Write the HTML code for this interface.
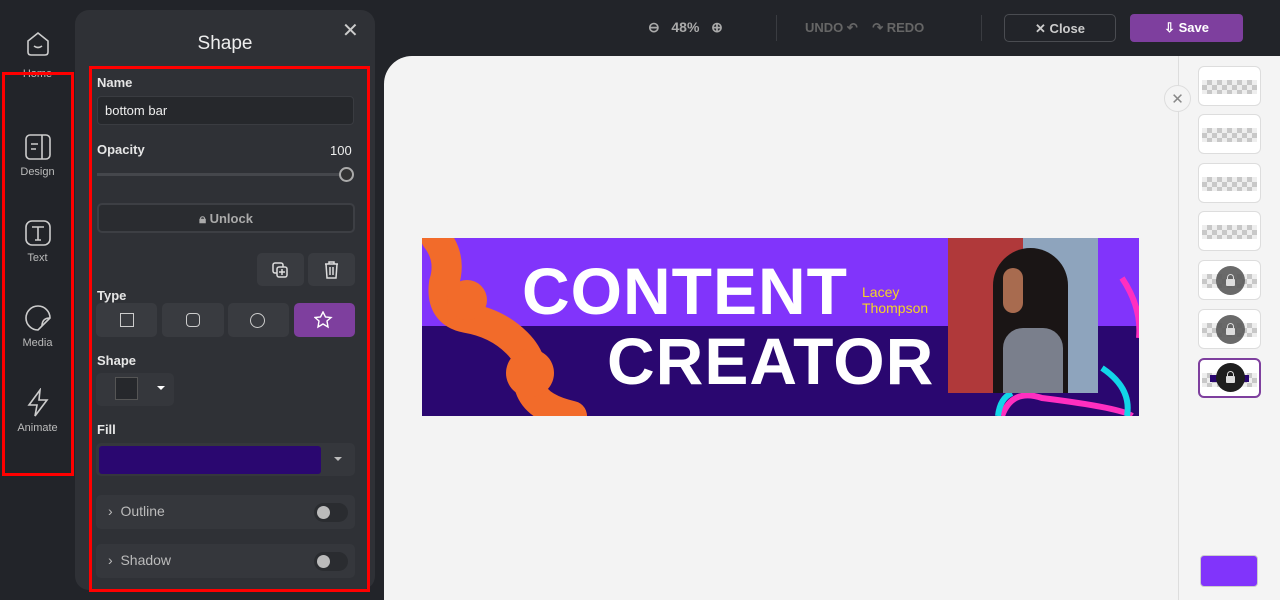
<!DOCTYPE html>
<html><head><style>
*{box-sizing:border-box;margin:0;padding:0}
body{width:1280px;height:600px;background:#222429;font-family:"Liberation Sans",sans-serif;position:relative;overflow:hidden;color:#ddd}
.abs{position:absolute}
.nav{left:0;width:75px;text-align:center;color:#bbb;font-size:11px}
.nav svg{display:block;margin:0 auto 4px}
.panel{left:75px;top:10px;width:300px;height:580px;background:#2f3136;border-radius:14px}
.lbl{font-size:13px;font-weight:bold;color:#e6e6e6}
.btn{background:#393b40;border-radius:5px}
.canvas{left:384px;top:56px;width:896px;height:544px;background:#f3f3f3;border-top-left-radius:28px}
.thumb{left:1198px;width:63px;height:40px;background:#fff;border:1px solid #ddd;border-radius:6px;overflow:hidden}
.chk{position:absolute;left:3px;right:3px;top:13px;height:14px;background:repeating-conic-gradient(#c8c8c8 0 25%,#eee 0 50%) 0 0/10px 10px}
.lock{position:absolute;left:17px;top:5px;width:29px;height:29px;border-radius:50%;background:rgba(90,90,90,.9)}
.lock:after{content:"";position:absolute;left:10px;top:13px;width:9px;height:7px;background:#ddd;border-radius:1px}
.lock:before{content:"";position:absolute;left:11px;top:8px;width:5px;height:6px;border:1.5px solid #ddd;border-bottom:none;border-radius:4px 4px 0 0}
</style></head><body>
<!-- left nav -->
<div class="abs nav" style="top:28px"><svg width="30" height="30" viewBox="0 0 30 30" fill="none" stroke="#ccc" stroke-width="1.6"><path d="M5 13 L15 5 L25 13 V24 Q25 27 22 27 H8 Q5 27 5 24Z"/><path d="M11 18 Q15 21 19 18"/></svg><span style="position:relative;top:6px">Home</span></div>
<div class="abs" style="left:2px;top:72px;width:72px;height:404px;border:3px solid #f00"></div>
<div class="abs nav" style="top:132px"><svg width="30" height="30" viewBox="0 0 30 30" fill="none" stroke="#ccc" stroke-width="1.6"><rect x="3" y="3" width="24" height="24" rx="4"/><path d="M19 3V27M8 12H15M8 17H13"/></svg>Design</div>
<div class="abs nav" style="top:218px"><svg width="30" height="30" viewBox="0 0 30 30" fill="none" stroke="#ccc" stroke-width="1.6"><rect x="3" y="3" width="24" height="24" rx="6"/><path d="M9 9H21M15 9V22M12 22H18"/></svg>Text</div>
<div class="abs nav" style="top:303px"><svg width="30" height="30" viewBox="0 0 30 30" fill="none" stroke="#ccc" stroke-width="1.6"><path d="M27 15A12 12 0 1 0 15 27L27 15Z"/><path d="M27 15Q19 15 19 23"/></svg>Media</div>
<div class="abs nav" style="top:388px"><svg width="30" height="30" viewBox="0 0 30 30" fill="none" stroke="#ccc" stroke-width="1.6"><path d="M17 2L6 17H14L12 28L24 12H16Z"/></svg>Animate</div>

<!-- panel -->
<div class="abs panel"></div>
<div class="abs" style="left:75px;width:300px;top:33px;text-align:center;font-size:19px;color:#eee">Shape</div>
<div class="abs" style="left:342px;top:18px;font-size:20px;color:#ccc">✕</div>
<div class="abs" style="left:89px;top:66px;width:281px;height:526px;border:3px solid #f00"></div>
<div class="abs lbl" style="left:97px;top:75px">Name</div>
<div class="abs" style="left:97px;top:96px;width:257px;height:29px;background:#26282c;border:1px solid #3a3c41;border-radius:4px;font-size:13px;color:#eee;padding:6px 7px">bottom bar</div>
<div class="abs lbl" style="left:97px;top:142px">Opacity</div>
<div class="abs" style="left:330px;top:143px;font-size:13px;color:#eee">100</div>
<div class="abs" style="left:97px;top:173px;width:245px;height:3px;background:#45474c"></div>
<div class="abs" style="left:339px;top:167px;width:15px;height:15px;border-radius:50%;border:2px solid #aaa;background:#333"></div>
<div class="abs" style="left:97px;top:203px;width:258px;height:30px;border:2px solid #3d3f44;background:#2a2c30;border-radius:5px;text-align:center;font-size:13px;font-weight:bold;color:#aaa;padding-top:6px">🔒︎ Unlock</div>
<div class="abs btn" style="left:257px;top:253px;width:47px;height:33px"><svg class="abs" style="left:14px;top:8px" width="18" height="18" viewBox="0 0 18 18" fill="none" stroke="#ddd" stroke-width="1.5"><rect x="2" y="2" width="10" height="10" rx="2"/><rect x="6" y="6" width="10" height="10" rx="2" fill="#393b40"/><path d="M11 8V14M8 11H14"/></svg></div>
<div class="abs btn" style="left:308px;top:253px;width:47px;height:33px"><svg class="abs" style="left:15px;top:8px" width="17" height="18" viewBox="0 0 17 18" fill="none" stroke="#ddd" stroke-width="1.5"><path d="M2 3H15M6 3V1H11V3M3 3L4 17H13L14 3M7 6V14M10 6V14"/></svg></div>
<div class="abs lbl" style="left:97px;top:288px">Type</div>
<div class="abs btn" style="left:96px;top:303px;width:61px;height:34px"><div class="abs" style="left:24px;top:10px;width:14px;height:14px;border:1.5px solid #ccc"></div></div>
<div class="abs btn" style="left:162px;top:303px;width:62px;height:34px"><div class="abs" style="left:24px;top:10px;width:14px;height:14px;border:1.5px solid #ccc;border-radius:4px"></div></div>
<div class="abs btn" style="left:228px;top:303px;width:61px;height:34px"><div class="abs" style="left:22px;top:10px;width:15px;height:15px;border:1.5px solid #ccc;border-radius:50%"></div></div>
<div class="abs" style="left:294px;top:303px;width:61px;height:34px;background:#7e3f9e;border-radius:5px"><svg class="abs" style="left:20px;top:8px" width="22" height="18" viewBox="0 0 22 18" fill="none" stroke="#fff" stroke-width="1.4"><path d="M9 1L11.5 6L17 6.5L13 10L14 16L9 13L4 16L5 10L1 6.5L6.5 6Z"/></svg></div>
<div class="abs lbl" style="left:97px;top:353px">Shape</div>
<div class="abs btn" style="left:96px;top:373px;width:78px;height:33px;background:#35373c"><div class="abs" style="left:19px;top:4px;width:23px;height:23px;border:1.5px solid #555;background:#26282c"></div><div class="abs" style="left:61px;top:13px;border:4px solid transparent;border-top:4px solid #fff"></div></div>
<div class="abs lbl" style="left:97px;top:422px">Fill</div>
<div class="abs btn" style="left:96px;top:443px;width:259px;height:33px;background:#35373c"><div class="abs" style="left:3px;top:3px;width:222px;height:28px;background:#2a0770;border-radius:3px"></div><div class="abs" style="left:238px;top:14px;border:4px solid transparent;border-top:4px solid #bbb"></div></div>
<div class="abs btn" style="left:96px;top:495px;width:259px;height:34px;background:#35373c;font-size:14px;color:#bbb;padding:8px 12px">› &nbsp;Outline<div class="abs" style="left:218px;top:8px;width:34px;height:19px;border-radius:10px;background:#2a2c30"><div class="abs" style="left:3px;top:3px;width:13px;height:13px;border-radius:50%;background:#bbb"></div></div></div>
<div class="abs btn" style="left:96px;top:544px;width:259px;height:34px;background:#35373c;font-size:14px;color:#bbb;padding:8px 12px">› &nbsp;Shadow<div class="abs" style="left:218px;top:8px;width:34px;height:19px;border-radius:10px;background:#2a2c30"><div class="abs" style="left:3px;top:3px;width:13px;height:13px;border-radius:50%;background:#bbb"></div></div></div>

<!-- top bar -->
<div class="abs" style="left:648px;top:19px;font-size:14px;color:#aaa;font-weight:bold">⊖ &nbsp; 48% &nbsp; ⊕</div>
<div class="abs" style="left:776px;top:15px;width:1px;height:26px;background:#3a3c41"></div>
<div class="abs" style="left:805px;top:20px;font-size:13px;font-weight:bold;color:#666">UNDO ↶ &nbsp;&nbsp; ↷ REDO</div>
<div class="abs" style="left:981px;top:15px;width:1px;height:26px;background:#3a3c41"></div>
<div class="abs" style="left:1004px;top:14px;width:112px;height:28px;border:1.5px solid #4a4c51;border-radius:5px;text-align:center;font-size:13px;font-weight:bold;color:#ccc;padding-top:6px">✕ Close</div>
<div class="abs" style="left:1130px;top:14px;width:113px;height:28px;background:#7e3f9e;border-radius:4px;text-align:center;font-size:13px;font-weight:bold;color:#fff;padding-top:6px">⇩ Save</div>

<!-- canvas -->
<div class="abs canvas"></div>
<div class="abs" style="left:1178px;top:56px;width:102px;height:544px;background:#f4f4f4;border-left:1px solid #ddd"></div>
<div class="abs" style="left:1164px;top:85px;width:27px;height:27px;border-radius:50%;background:#f4f4f4;border:1px solid #ddd;text-align:center;color:#888;font-size:15px;padding-top:4px">✕</div>
<div class="abs thumb" style="top:66px"><div class="chk"></div></div>
<div class="abs thumb" style="top:114px"><div class="chk"></div></div>
<div class="abs thumb" style="top:163px"><div class="chk"></div></div>
<div class="abs thumb" style="top:211px"><div class="chk"></div></div>
<div class="abs thumb" style="top:260px"><div class="chk"></div><div class="lock"></div></div>
<div class="abs thumb" style="top:309px"><div class="chk"></div><div class="lock"></div></div>
<div class="abs thumb" style="top:358px;border:2px solid #7e3f9e"><div class="chk" style="left:2px;right:2px"></div><div class="chk" style="background:#2a0770;top:15px;left:10px;right:10px;height:7px"></div><div class="lock" style="background:#1e1e1e;left:16px;top:3px"></div></div>
<div class="abs" style="left:1200px;top:555px;width:58px;height:32px;background:#8134fb;border-radius:4px;border:1px solid #ccc"></div>

<!-- banner -->
<div class="abs" style="left:422px;top:238px;width:717px;height:178px;background:#2a0770;overflow:hidden">
<div class="abs" style="left:0;top:0;width:717px;height:88px;background:#8134fb"></div>
<svg class="abs" style="left:0;top:0" width="717" height="178"><path d="M14 0 Q30 20 22 45 Q18 75 45 80 Q75 85 95 105 Q115 125 108 150 Q115 170 150 178" fill="none" stroke="#f26b2a" stroke-width="30" stroke-linecap="round"/><circle cx="45" cy="62" r="20" fill="#f26b2a"/><circle cx="108" cy="135" r="24" fill="#f26b2a"/><path d="M700 40 Q720 70 717 100" fill="none" stroke="#ff2fc0" stroke-width="6"/><path d="M580 178 Q590 150 620 160 Q700 170 710 178" fill="none" stroke="#ff2fc0" stroke-width="6"/><path d="M680 130 Q710 150 705 178" fill="none" stroke="#12d6e8" stroke-width="6"/><path d="M576 178 Q578 160 590 155" fill="none" stroke="#12d6e8" stroke-width="6"/></svg>
<div class="abs" style="left:100px;top:15px;font-size:66px;font-weight:900;color:#fff;letter-spacing:1px">CONTENT</div>
<div class="abs" style="left:185px;top:85px;font-size:66px;font-weight:900;color:#fff;letter-spacing:1px">CREATOR</div>
<div class="abs" style="left:440px;top:46px;font-size:14px;color:#f5d326;line-height:16px">Lacey<br>Thompson</div>
<div class="abs" style="left:526px;top:0;width:150px;height:155px;background:linear-gradient(90deg,#b0393a 0 50%,#8ea4bd 50%);overflow:hidden"><div class="abs" style="left:45px;top:10px;width:75px;height:145px;background:#1a1515;border-radius:40px 40px 0 0"></div><div class="abs" style="left:55px;top:90px;width:60px;height:65px;background:#7a7f8c;border-radius:20px 20px 0 0"></div><div class="abs" style="left:55px;top:30px;width:20px;height:45px;background:#a86b4f;border-radius:10px"></div></div>
</div>
</body></html>
